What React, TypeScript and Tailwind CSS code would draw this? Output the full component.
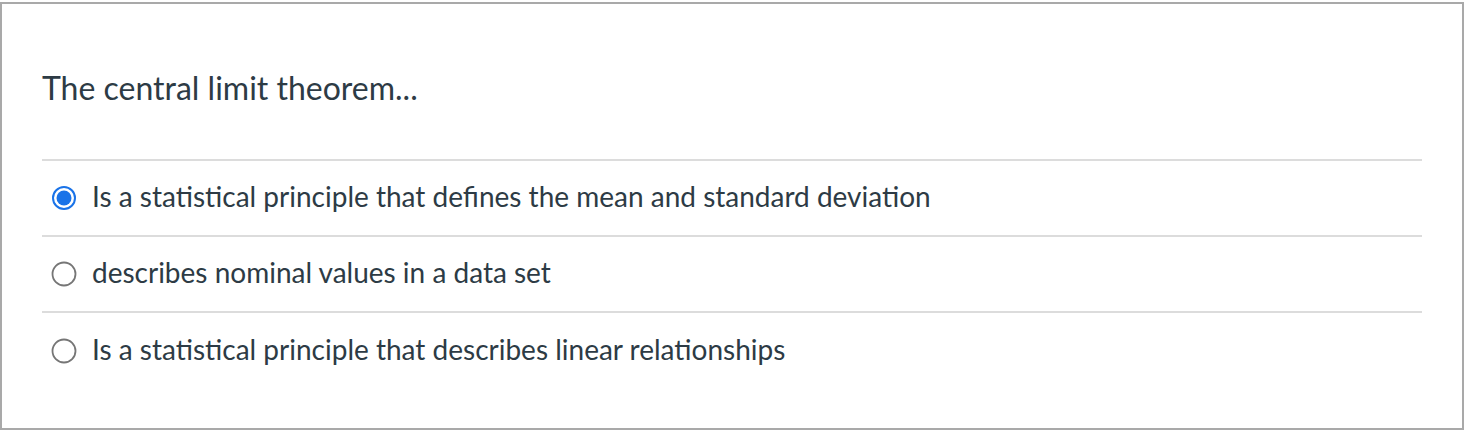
import React from "react";

const options = [
  { text: "Is a statistical principle that defines the mean and standard deviation", checked: true },
  { text: "describes nominal values in a data set", checked: false },
  { text: "Is a statistical principle that describes linear relationships", checked: false },
];

function Radio({ checked }: { checked: boolean }) {
  return (
    <svg width="26" height="26" viewBox="0 0 26 26" className="shrink-0">
      {checked ? (
        <>
          <circle cx="13" cy="13" r="11" fill="white" stroke="#1a73e8" strokeWidth="2" />
          <circle cx="13" cy="13" r="7.5" fill="#1a73e8" />
        </>
      ) : (
        <circle cx="13" cy="13" r="11.5" fill="white" stroke="#767676" strokeWidth="1.8" />
      )}
    </svg>
  );
}

export default function App() {
  return (
    <div className="w-[1464px] h-[430px] bg-white pt-[2px]" style={{ fontFamily: "Lato, 'Noto Sans', sans-serif" }}>
      <div className="h-[428px] border-2 border-[#a9a9a9] pl-[40px] pr-[40px] text-[#2d3b45]">
        <div className="pt-[65px] pb-[52px] text-[32px] leading-[38px]">The central limit theorem...</div>
        <div className="border-t-2 border-[#dcdcdc]">
          {options.map((o, i) => (
            <div
              key={i}
              className={`flex items-center gap-[15px] pl-[9px] h-[76px] ${i < options.length - 1 ? "border-b-2 border-[#dcdcdc]" : ""}`}
            >
              <Radio checked={o.checked} />
              <span className="text-[28px] leading-[34px] -mt-[4px]">{o.text}</span>
            </div>
          ))}
        </div>
      </div>
    </div>
  );
}
